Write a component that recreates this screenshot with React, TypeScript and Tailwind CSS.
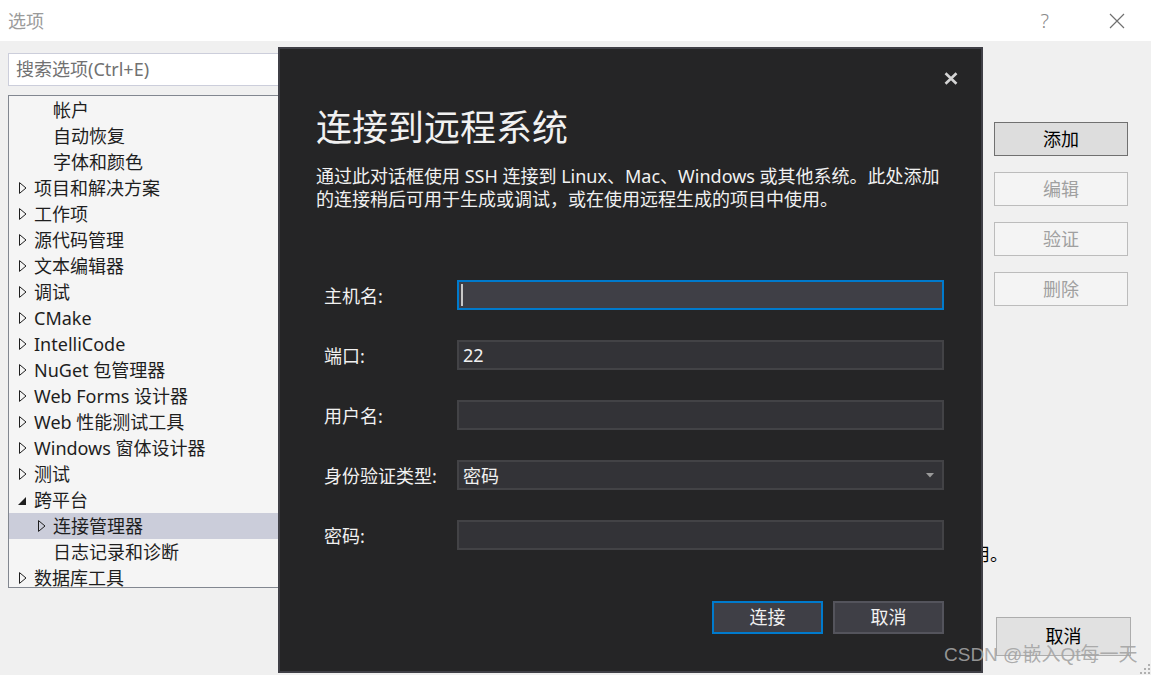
import React from "react";

type TreeItem = {
    label: string;
    level: 0 | 1;
    arrow: "closed" | "open" | "none";
    selected?: boolean;
};

const treeItems: TreeItem[] = [
    { label: "帐户", level: 1, arrow: "none" },
    { label: "自动恢复", level: 1, arrow: "none" },
    { label: "字体和颜色", level: 1, arrow: "none" },
    { label: "项目和解决方案", level: 0, arrow: "closed" },
    { label: "工作项", level: 0, arrow: "closed" },
    { label: "源代码管理", level: 0, arrow: "closed" },
    { label: "文本编辑器", level: 0, arrow: "closed" },
    { label: "调试", level: 0, arrow: "closed" },
    { label: "CMake", level: 0, arrow: "closed" },
    { label: "IntelliCode", level: 0, arrow: "closed" },
    { label: "NuGet 包管理器", level: 0, arrow: "closed" },
    { label: "Web Forms 设计器", level: 0, arrow: "closed" },
    { label: "Web 性能测试工具", level: 0, arrow: "closed" },
    { label: "Windows 窗体设计器", level: 0, arrow: "closed" },
    { label: "测试", level: 0, arrow: "closed" },
    { label: "跨平台", level: 0, arrow: "open" },
    { label: "连接管理器", level: 1, arrow: "closed", selected: true },
    { label: "日志记录和诊断", level: 1, arrow: "none" },
    { label: "数据库工具", level: 0, arrow: "closed" },
];

const Arrow = ({ kind }: { kind: TreeItem["arrow"] }) => {
    if (kind === "closed") {
        return (
            <svg width="8" height="12" viewBox="0 0 8 12" className="block">
                <path d="M0.5 0.6 L7 6 L0.5 11.4 Z" fill="none" stroke="#1e1e1e" strokeWidth="1" />
            </svg>
        );
    }
    if (kind === "open") {
        return (
            <svg width="10" height="10" viewBox="0 0 10 10" className="block -ml-[2px] mt-[2px]">
                <path d="M9 1 L9 9 L1 9 Z" fill="#1e1e1e" />
            </svg>
        );
    }
    return null;
};

const TreeRow = ({ item }: { item: TreeItem }) => (
    <div
        className={`flex items-center h-[26px] whitespace-nowrap ${item.level === 0 ? "pl-[10px]" : "pl-[29px]"} ${item.selected ? "bg-[#cbcdda]" : ""}`}
    >
        <span className="w-[15px] flex items-center">
            <Arrow kind={item.arrow} />
        </span>
        <span className="text-[18px] leading-[26px] text-[#1e1e1e]">{item.label}</span>
    </div>
);

const SideButton = ({ label, enabled }: { label: string; enabled?: boolean }) => (
    <button
        className={`w-[134px] h-[34px] border text-[18px] leading-[30px] ${
            enabled ? "bg-[#dddddd] border-[#707070] text-black" : "bg-[#f4f4f4] border-[#bcbcbc] text-[#a0a0a0]"
        }`}
    >
        {label}
    </button>
);

const FormRow = ({ label, children }: { label: string; children: React.ReactNode }) => (
    <div className="flex items-center h-[30px]">
        <span className="w-[133px] text-[18px] text-[#f1f1f1] whitespace-nowrap pt-[2px]">{label}</span>
        {children}
    </div>
);

const inputBox = "flex-1 h-[30px] border-2 border-[#434346] bg-[#333337] flex items-center px-[4px] text-[18px] text-[#f1f1f1]";

export default function App() {
    return (
        <div className="relative w-[1151px] h-[675px] overflow-hidden bg-[#f0f0f0] font-['Noto_Sans','Noto_Sans_CJK_SC',sans-serif] flex flex-col">
            {/* window title bar */}
            <div className="h-[41px] bg-white flex items-center pl-[8px] shrink-0">
                <span className="text-[18px] text-[#9b9b9b] leading-none">选项</span>
                <span className="ml-auto text-[20px] font-light text-[#8a8a8a] leading-none">?</span>
                <svg width="16" height="16" viewBox="0 0 16 16" className="ml-[60px] mr-[26px]">
                    <path d="M1 1 L15 15 M15 1 L1 15" stroke="#707070" strokeWidth="1.2" />
                </svg>
            </div>

            <div className="flex flex-1 pl-[8px]">
                {/* left: search + tree */}
                <div className="w-[290px] flex flex-col">
                    <div className="mt-[12px] h-[33px] border border-[#cccedb] bg-white flex items-center px-[7px]">
                        <span className="text-[18px] text-[#717171]">搜索选项(Ctrl+E)</span>
                    </div>
                    <div className="mt-[9px] h-[493px] border border-[#828790] bg-[#f5f5f5] overflow-hidden pt-[1px]">
                        {treeItems.map((item) => (
                            <TreeRow key={item.label} item={item} />
                        ))}
                    </div>
                </div>

                {/* middle page */}
                <div className="flex-1 flex flex-col items-end">
                    <p className="mt-[500px] -mr-[14px] text-[18px] text-black whitespace-nowrap">或在使用远程生成的项目中使用。</p>
                </div>

                {/* right buttons */}
                <div className="w-[137px] mr-[20px] flex flex-col">
                    <div className="mt-[81px] flex flex-col gap-[16px]">
                        <SideButton label="添加" enabled />
                        <SideButton label="编辑" />
                        <SideButton label="验证" />
                        <SideButton label="删除" />
                    </div>
                    <button className="mt-auto mb-[19px] ml-[2px] w-[135px] h-[39px] bg-[#e1e1e1] border border-[#adadad] text-[18px] text-black">
                        取消
                    </button>
                </div>
            </div>

            {/* remote connection dialog */}
            <div className="absolute left-[278px] top-[47px] w-[705px] h-[626px] border-2 border-[#3f3f46] bg-[#252526] flex flex-col">
                <div className="flex justify-end pt-[23px] pr-[23px]">
                    <svg width="14" height="13" viewBox="0 0 14 13">
                        <path d="M1.5 1.2 L12.5 11.8 M12.5 1.2 L1.5 11.8" stroke="#d4d4d4" strokeWidth="2.6" />
                    </svg>
                </div>
                <div className="pl-[36px] pr-[37px]">
                    <h1 className="mt-[19px] text-[36px] leading-[48px] text-[#f1f1f1] font-normal">连接到远程系统</h1>
                    <p className="mt-[13px] text-[18px] leading-[23px] text-[#f1f1f1] whitespace-nowrap">
                        通过此对话框使用 SSH 连接到 Linux、Mac、Windows 或其他系统。此处添加
                        <br />
                        的连接稍后可用于生成或调试，或在使用远程生成的项目中使用。
                    </p>
                </div>
                <div className="mt-[69px] pl-[44px] pr-[37px] flex flex-col gap-[30px]">
                    <FormRow label="主机名:">
                        <div className="flex-1 h-[30px] border-2 border-[#007acc] bg-[#3f3f46] flex items-center pl-[2px]">
                            <span className="w-[2px] h-[22px] bg-[#c8c8c8]" />
                        </div>
                    </FormRow>
                    <FormRow label="端口:">
                        <div className={inputBox}>22</div>
                    </FormRow>
                    <FormRow label="用户名:">
                        <div className={inputBox} />
                    </FormRow>
                    <FormRow label="身份验证类型:">
                        <div className={inputBox}>
                            <span className="pt-[2px]">密码</span>
                            <svg width="8" height="5" viewBox="0 0 8 5" className="ml-auto mr-[4px]">
                                <path d="M0 0 L8 0 L4 4.5 Z" fill="#9a9a9a" />
                            </svg>
                        </div>
                    </FormRow>
                    <FormRow label="密码:">
                        <div className={inputBox} />
                    </FormRow>
                </div>
                <div className="mt-[51px] pr-[37px] flex justify-end gap-[10px]">
                    <button className="w-[111px] h-[33px] border-2 border-[#007acc] bg-[#3f3f46] text-[18px] text-[#f1f1f1]">连接</button>
                    <button className="w-[111px] h-[33px] border-2 border-[#54545c] bg-[#3f3f46] text-[18px] text-[#f1f1f1]">取消</button>
                </div>
            </div>

            {/* watermark */}
            <div className="absolute left-[944px] top-[642px] text-[19px] leading-[26px] text-[#a3a3a3]/90 whitespace-nowrap font-['Liberation_Sans','Noto_Sans_CJK_SC',sans-serif]">
                CSDN @嵌入Qt每一天
            </div>

            {/* resize grip */}
            <svg width="10" height="10" viewBox="0 0 10 10" className="absolute right-[1px] bottom-[1px]">
                <rect x="8" y="0" width="2" height="2" fill="#b0b0b0" />
                <rect x="4" y="4" width="2" height="2" fill="#b0b0b0" />
                <rect x="8" y="4" width="2" height="2" fill="#b0b0b0" />
                <rect x="0" y="8" width="2" height="2" fill="#b0b0b0" />
                <rect x="4" y="8" width="2" height="2" fill="#b0b0b0" />
                <rect x="8" y="8" width="2" height="2" fill="#b0b0b0" />
            </svg>
        </div>
    );
}
